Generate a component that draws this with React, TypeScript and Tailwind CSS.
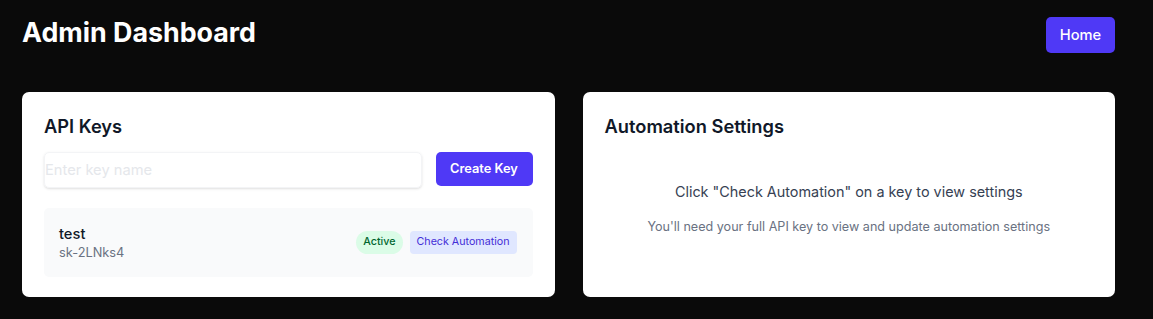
import React from "react";

export default function App() {
  return (
    <div
      className="min-h-[319px] w-full bg-[#0a0a0a] pl-[22px] pr-[38px] pt-[14px]"
      style={{ fontFamily: "Inter, 'Noto Sans', sans-serif" }}
    >
      <div className="flex items-start justify-between">
        <h1 className="text-[26.8px] leading-[36px] font-bold text-white">Admin Dashboard</h1>
        <button className="mt-[3px] h-[36px] w-[69px] rounded-[5px] bg-[#4f39f6] text-[14.7px] font-medium text-white">
          Home
        </button>
      </div>

      <div className="mt-[39px] grid grid-cols-2 gap-[28px]">
        <div className="h-[205px] rounded-[7px] bg-white p-[22px]">
          <h2 className="text-[18.3px] leading-[24px] font-semibold text-gray-900">API Keys</h2>
          <div className="mt-[14px] flex gap-[14px]">
            <input
              className="h-[36px] flex-1 rounded-[5px] border border-gray-100 text-[14.7px] shadow-sm outline-none placeholder:text-gray-200"
              placeholder="Enter key name"
            />
            <button className="h-[34px] w-[97px] rounded-[5px] bg-[#4f39f6] text-[12.8px] font-semibold text-white">
              Create Key
            </button>
          </div>
          <div className="mt-[20px] flex h-[69px] items-center justify-between rounded-[5px] bg-gray-50 pl-[15px] pr-[16px]">
            <div>
              <div className="text-[14.7px] leading-[20px] font-medium text-gray-900">test</div>
              <div className="text-[12.8px] leading-[18px] text-gray-500">sk-2LNks4</div>
            </div>
            <div className="flex items-center gap-[7px]">
              <span className="rounded-full bg-green-100 px-[7px] py-[3px] text-[10.7px] font-medium text-green-800">
                Active
              </span>
              <span className="rounded-[4px] bg-indigo-100 px-[7px] py-[3px] text-[10.7px] font-normal text-indigo-700">
                Check Automation
              </span>
            </div>
          </div>
        </div>

        <div className="flex h-[205px] flex-col rounded-[7px] bg-white p-[22px]">
          <h2 className="text-[18.3px] leading-[24px] font-semibold text-gray-900">Automation Settings</h2>
          <div className="flex flex-1 flex-col items-center justify-center pt-[4px] text-center">
            <p className="text-[14.4px] leading-[20px] text-gray-700">
              Click "Check Automation" on a key to view settings
            </p>
            <p className="mt-[16px] text-[12.6px] leading-[18px] text-gray-500">
              You'll need your full API key to view and update automation settings
            </p>
          </div>
        </div>
      </div>
    </div>
  );
}
